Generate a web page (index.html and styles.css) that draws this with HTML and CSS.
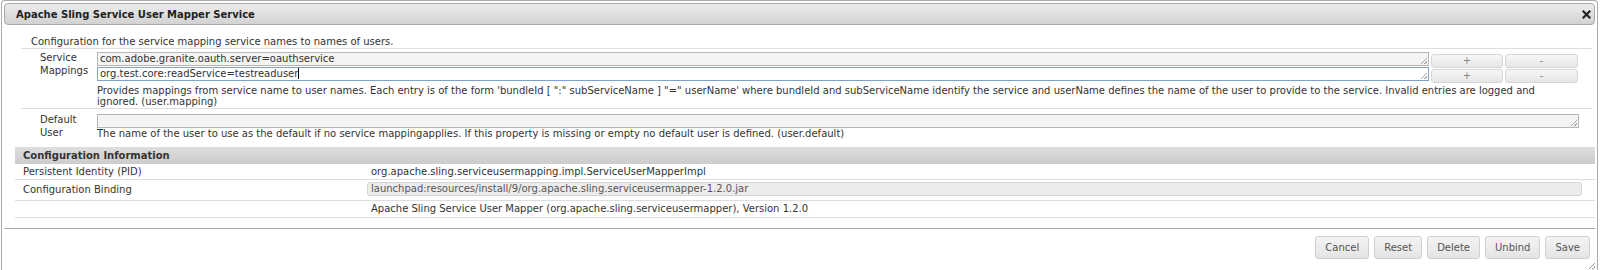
FILE: index.html
```html
<!DOCTYPE html>
<html lang="en">
<head>
  <meta charset="UTF-8">
  <title>Apache Sling Service User Mapper Service</title>
  <link rel="stylesheet" href="styles.css">
</head>
<body>

  <div class="dialog">
    <!-- Title -->
    <div class="titlebar">
      <span class="title">Apache Sling Service User Mapper Service</span>
      <span class="close">
        <svg width="9" height="9" viewBox="0 0 9 9"><path d="M1.5 1.5l6 6M7.5 1.5l-6 6" stroke="#222" stroke-width="2.2" stroke-linecap="square"/></svg>
      </span>
    </div>

    <div class="content">
      <p class="intro">Configuration for the service mapping service names to names of users.</p>

      <!-- Properties -->
      <div class="props">
        <div class="prop-row first">
          <div class="label">Service<br>Mappings</div>
          <div class="field">
            <div class="multi">
              <div class="txt multi-txt">com.adobe.granite.oauth.server=oauthservice</div>
              <button class="small-btn plus">+</button>
              <button class="small-btn minus">-</button>
            </div>
            <div class="multi">
              <div class="txt multi-txt focus">org.test.core:readService=testreaduser<span class="caret"></span></div>
              <button class="small-btn plus">+</button>
              <button class="small-btn minus">-</button>
            </div>
            <div class="desc">Provides mappings from service name to user names. Each entry is of the form 'bundleId [ ":" subServiceName ] "=" userName' where bundleId and subServiceName identify the service and userName defines the name of the user to provide to the service. Invalid entries are logged and ignored. (user.mapping)</div>
          </div>
        </div>
        <div class="prop-row second">
          <div class="label">Default<br>User</div>
          <div class="field">
            <div class="txt single-txt"></div>
            <div class="desc">The name of the user to use as the default if no service mappingapplies. If this property is missing or empty no default user is defined. (user.default)</div>
          </div>
        </div>
      </div>

      <!-- Configuration Information -->
      <div class="info">
        <div class="info-head">Configuration Information</div>
        <div class="info-row">
          <div class="key">Persistent Identity (PID)</div>
          <div class="val">org.apache.sling.serviceusermapping.impl.ServiceUserMapperImpl</div>
        </div>
        <div class="info-row binding">
          <div class="key">Configuration Binding</div>
          <div class="val"><div class="bind-box">launchpad:resources/install/9/org.apache.sling.serviceusermapper-1.2.0.jar</div></div>
        </div>
        <div class="info-row">
          <div class="key"></div>
          <div class="val">Apache Sling Service User Mapper (org.apache.sling.serviceusermapper), Version 1.2.0</div>
        </div>
      </div>
    </div>

    <!-- Buttons -->
    <div class="buttonpane">
      <button class="pane-btn">Cancel</button>
      <button class="pane-btn">Reset</button>
      <button class="pane-btn">Delete</button>
      <button class="pane-btn">Unbind</button>
      <button class="pane-btn">Save</button>
    </div>
  </div>

</body>
</html>
```

FILE: styles.css
```css
* { margin:0; padding:0; box-sizing:border-box; }
body {
  background:#fff; color:#333;
  font-family:"DejaVu Sans", Verdana, sans-serif; font-size:10px;
}

/* Dialog frame */
.dialog {
  position:relative;
  margin-left:1px; width:1597px; height:270px;
  border:1px solid #aaa; border-bottom:none; border-radius:4px 4px 0 0; padding:2px;
}
.dialog::after {
  content:""; position:absolute; right:2px; top:262px;
  width:6px; height:6px;
  background:linear-gradient(135deg,transparent 45%,#999 45%,#999 55%,transparent 55%,transparent 75%,#999 75%,#999 85%,transparent 85%);
}
.titlebar {
  height:22px; border:1px solid #aaa; border-radius:4px;
  background:linear-gradient(#ececec,#d2d2d2);
  display:flex; align-items:center; justify-content:space-between;
  padding:0 3px 0 11px;
  font-weight:bold; color:#222;
}
.close { display:flex; }

/* Content */
.intro { margin:10px 0 0 27px; line-height:13px; }

.props { margin:0 3px 0 17px; border-top:1px solid #ddd; }
.prop-row { display:flex; }
.prop-row.first { border-bottom:1px solid #ddd; padding:3px 0 1px; }
.prop-row.second { padding:5px 0 0; }
.label { width:76px; padding:0 0 0 19px; line-height:13px; margin-top:-1px; }
.field { flex:1; }

.multi { display:flex; gap:2px; height:15px; align-items:flex-start; }
.txt {
  position:relative;
  height:14px; border:1px solid #b5b5b5; background:#f4f4f4;
  padding:0 2px; line-height:12px; color:#333; white-space:nowrap;
}
.txt::after {
  content:""; position:absolute; right:1px; bottom:1px;
  width:6px; height:6px;
  background:linear-gradient(135deg,transparent 45%,#aaa 45%,#aaa 55%,transparent 55%,transparent 75%,#aaa 75%,#aaa 85%,transparent 85%);
}
.multi-txt { width:1332px; }
.txt.focus { background:#fff; border-color:#7ea2c8; }
.caret { display:inline-block; width:1px; height:11px; background:#000; vertical-align:-2px; }
.single-txt { width:1482px; }

.small-btn {
  margin-top:2px; height:14px;
  border:1px solid #d6d6d6; border-radius:3px;
  background:linear-gradient(#f6f6f6,#e6e6e6);
  color:#888; font:10px "DejaVu Sans", Verdana, sans-serif; line-height:12px;
}
.small-btn.plus { width:72px; }
.small-btn.minus { width:73px; }

.desc { width:1460px; margin-top:3px; line-height:11px; }
.prop-row.second .desc { margin-top:0; }

/* Configuration information */
.info { margin:8px 0 0 11px; }
.info-head {
  height:17px; line-height:17px; padding-left:8px;
  background:linear-gradient(#dedede,#cccccc);
  font-weight:bold; color:#333;
}
.info-row { display:flex; border-bottom:1px solid #ddd; line-height:15px; }
.info-row .key { width:352px; padding-left:8px; }
.info-row .val { flex:1; padding-left:4px; }
.info-row:last-child { line-height:16px; }
.info-row.binding { padding:2px 0 3px; }
.info-row.binding .val { padding-left:0; padding-right:13px; }
.bind-box {
  height:14px; line-height:12px; padding-left:3px;
  border:1px solid #d4d4d4; border-radius:3px;
  background:#ececec; color:#555;
}

/* Button pane */
.buttonpane {
  margin-top:10px; border-top:1px solid #aaa;
  display:flex; justify-content:flex-end; gap:5px;
  padding:7px 5px 0 0;
}
.pane-btn {
  height:23px; padding:0 9px;
  border:1px solid #d0d0d0; border-radius:3px;
  background:linear-gradient(#f4f4f4,#e4e4e4);
  color:#555; font:10px "DejaVu Sans", Verdana, sans-serif;
}
```
